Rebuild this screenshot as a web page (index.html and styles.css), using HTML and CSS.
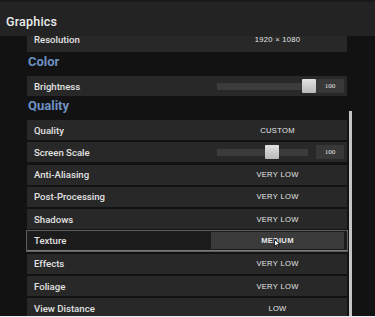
FILE: index.html
```html
<!DOCTYPE html>
<html>
<head>
<meta charset="utf-8">
<link rel="stylesheet" href="styles.css">
</head>
<body>
<div class="app">
  <div class="header"><span class="title">Graphics</span></div>
  <div class="main">
    <div class="content">
      <div class="row first">
        <span class="label">Resolution</span>
        <span class="value">1920 × 1080</span>
      </div>
      <div class="heading">Color</div>
      <div class="row">
        <span class="label">Brightness</span>
        <div class="control">
          <div class="slider">
            <div class="track"></div>
            <div class="thumb" style="left: 85px"></div>
          </div>
          <div class="numbox">100</div>
        </div>
      </div>
      <div class="heading">Quality</div>
      <div class="group">
        <div class="row"><span class="label">Quality</span><span class="value">CUSTOM</span></div>
        <div class="row">
          <span class="label">Screen Scale</span>
          <div class="control">
            <div class="slider">
              <div class="track"></div>
              <div class="thumb" style="left: 48px"></div>
            </div>
            <div class="numbox">100</div>
          </div>
        </div>
        <div class="row"><span class="label">Anti-Aliasing</span><span class="value">VERY LOW</span></div>
        <div class="row"><span class="label">Post-Processing</span><span class="value">VERY LOW</span></div>
        <div class="row"><span class="label">Shadows</span><span class="value">VERY LOW</span></div>
        <div class="row hover">
          <span class="label">Texture</span>
          <span class="value boxed">MEDIUM
            <svg class="cursor" width="7" height="9" viewBox="0 0 7 9"><path d="M0.5 0.5 L0.5 7.5 L2.3 5.8 L3.6 8.5 L4.6 8 L3.4 5.4 L6 5.4 Z" fill="#fff" stroke="#000" stroke-width="0.8"/></svg>
          </span>
        </div>
        <div class="row"><span class="label">Effects</span><span class="value">VERY LOW</span></div>
        <div class="row"><span class="label">Foliage</span><span class="value">VERY LOW</span></div>
        <div class="row"><span class="label">View Distance</span><span class="value">LOW</span></div>
      </div>
    </div>
    <div class="scrollbar"></div>
  </div>
</div>
</body>
</html>
```
FILE: styles.css
```css
html, body {
  margin: 0;
  padding: 0;
  background: #e9eef2;
}
.app {
  width: 375px;
  height: 316px;
  background: #121212;
  display: flex;
  flex-direction: column;
  overflow: hidden;
  font-family: Roboto, "Liberation Sans", sans-serif;
}
.header {
  height: 36px;
  flex: none;
  box-sizing: border-box;
  background: #232323;
  border-top: 2px solid #1a1a1a;
  padding: 9px 0 0 6px;
  position: relative;
  z-index: 2;
}
.title {
  color: #ececec;
  font-size: 12.5px;
  font-weight: 500;
  line-height: 20px;
  letter-spacing: 0.2px;
}
.main {
  flex: 1;
  display: flex;
  overflow: hidden;
  min-height: 0;
}
.content {
  width: 320px;
  margin-left: 27px;
  display: flex;
  flex-direction: column;
}
.scrollbar {
  width: 3px;
  margin-left: 2px;
  margin-top: 75px;
  background: #c4c4c4;
  flex: none;
}
.group {
  display: flex;
  flex-direction: column;
  gap: 2.3px;
}
.row {
  height: 20px;
  flex: none;
  display: flex;
  align-items: center;
  background: #282828;
  box-sizing: border-box;
}
.row.first {
  height: 26px;
  margin-top: -10px;
}
.label {
  flex: 1;
  padding-left: 7px;
  color: #e2e2e2;
  font-size: 9.6px;
  font-weight: 500;
}
.value {
  width: 133px;
  margin-right: 3px;
  text-align: center;
  color: #e6e6e6;
  font-family: "Liberation Sans", Arial, sans-serif;
  font-size: 7.6px;
  letter-spacing: 0.3px;
}
.heading {
  height: 24px;
  flex: none;
  line-height: 20px;
  padding-left: 1px;
  color: #6d91c3;
  font-size: 13px;
  font-weight: 700;
}
.control {
  width: 127px;
  margin-right: 3px;
  display: flex;
  align-items: center;
}
.slider {
  width: 99px;
  height: 14px;
  position: relative;
  display: flex;
  align-items: center;
}
.track {
  width: 91px;
  height: 7px;
  background: #3b3b3b;
}
.thumb {
  position: absolute;
  top: 0;
  width: 14px;
  height: 14px;
  background: linear-gradient(#e2e2e2, #b9b9b9);
  border-radius: 1px;
}
.numbox {
  width: 28px;
  height: 14px;
  background: #383838;
  color: #e6e6e6;
  font-family: "Liberation Serif", serif;
  font-size: 7px;
  line-height: 14px;
  text-align: center;
}
.row.hover {
  background: #1b1b1b;
  box-shadow: 0 0 0 1px #5e5e5e;
  border-bottom: 1px solid #7a7a7a;
}
.value.boxed {
  height: 17px;
  line-height: 17px;
  background: #3b3b3b;
  position: relative;
  font-weight: 700;
}
.cursor {
  position: absolute;
  left: 63px;
  top: 7px;
}
```
